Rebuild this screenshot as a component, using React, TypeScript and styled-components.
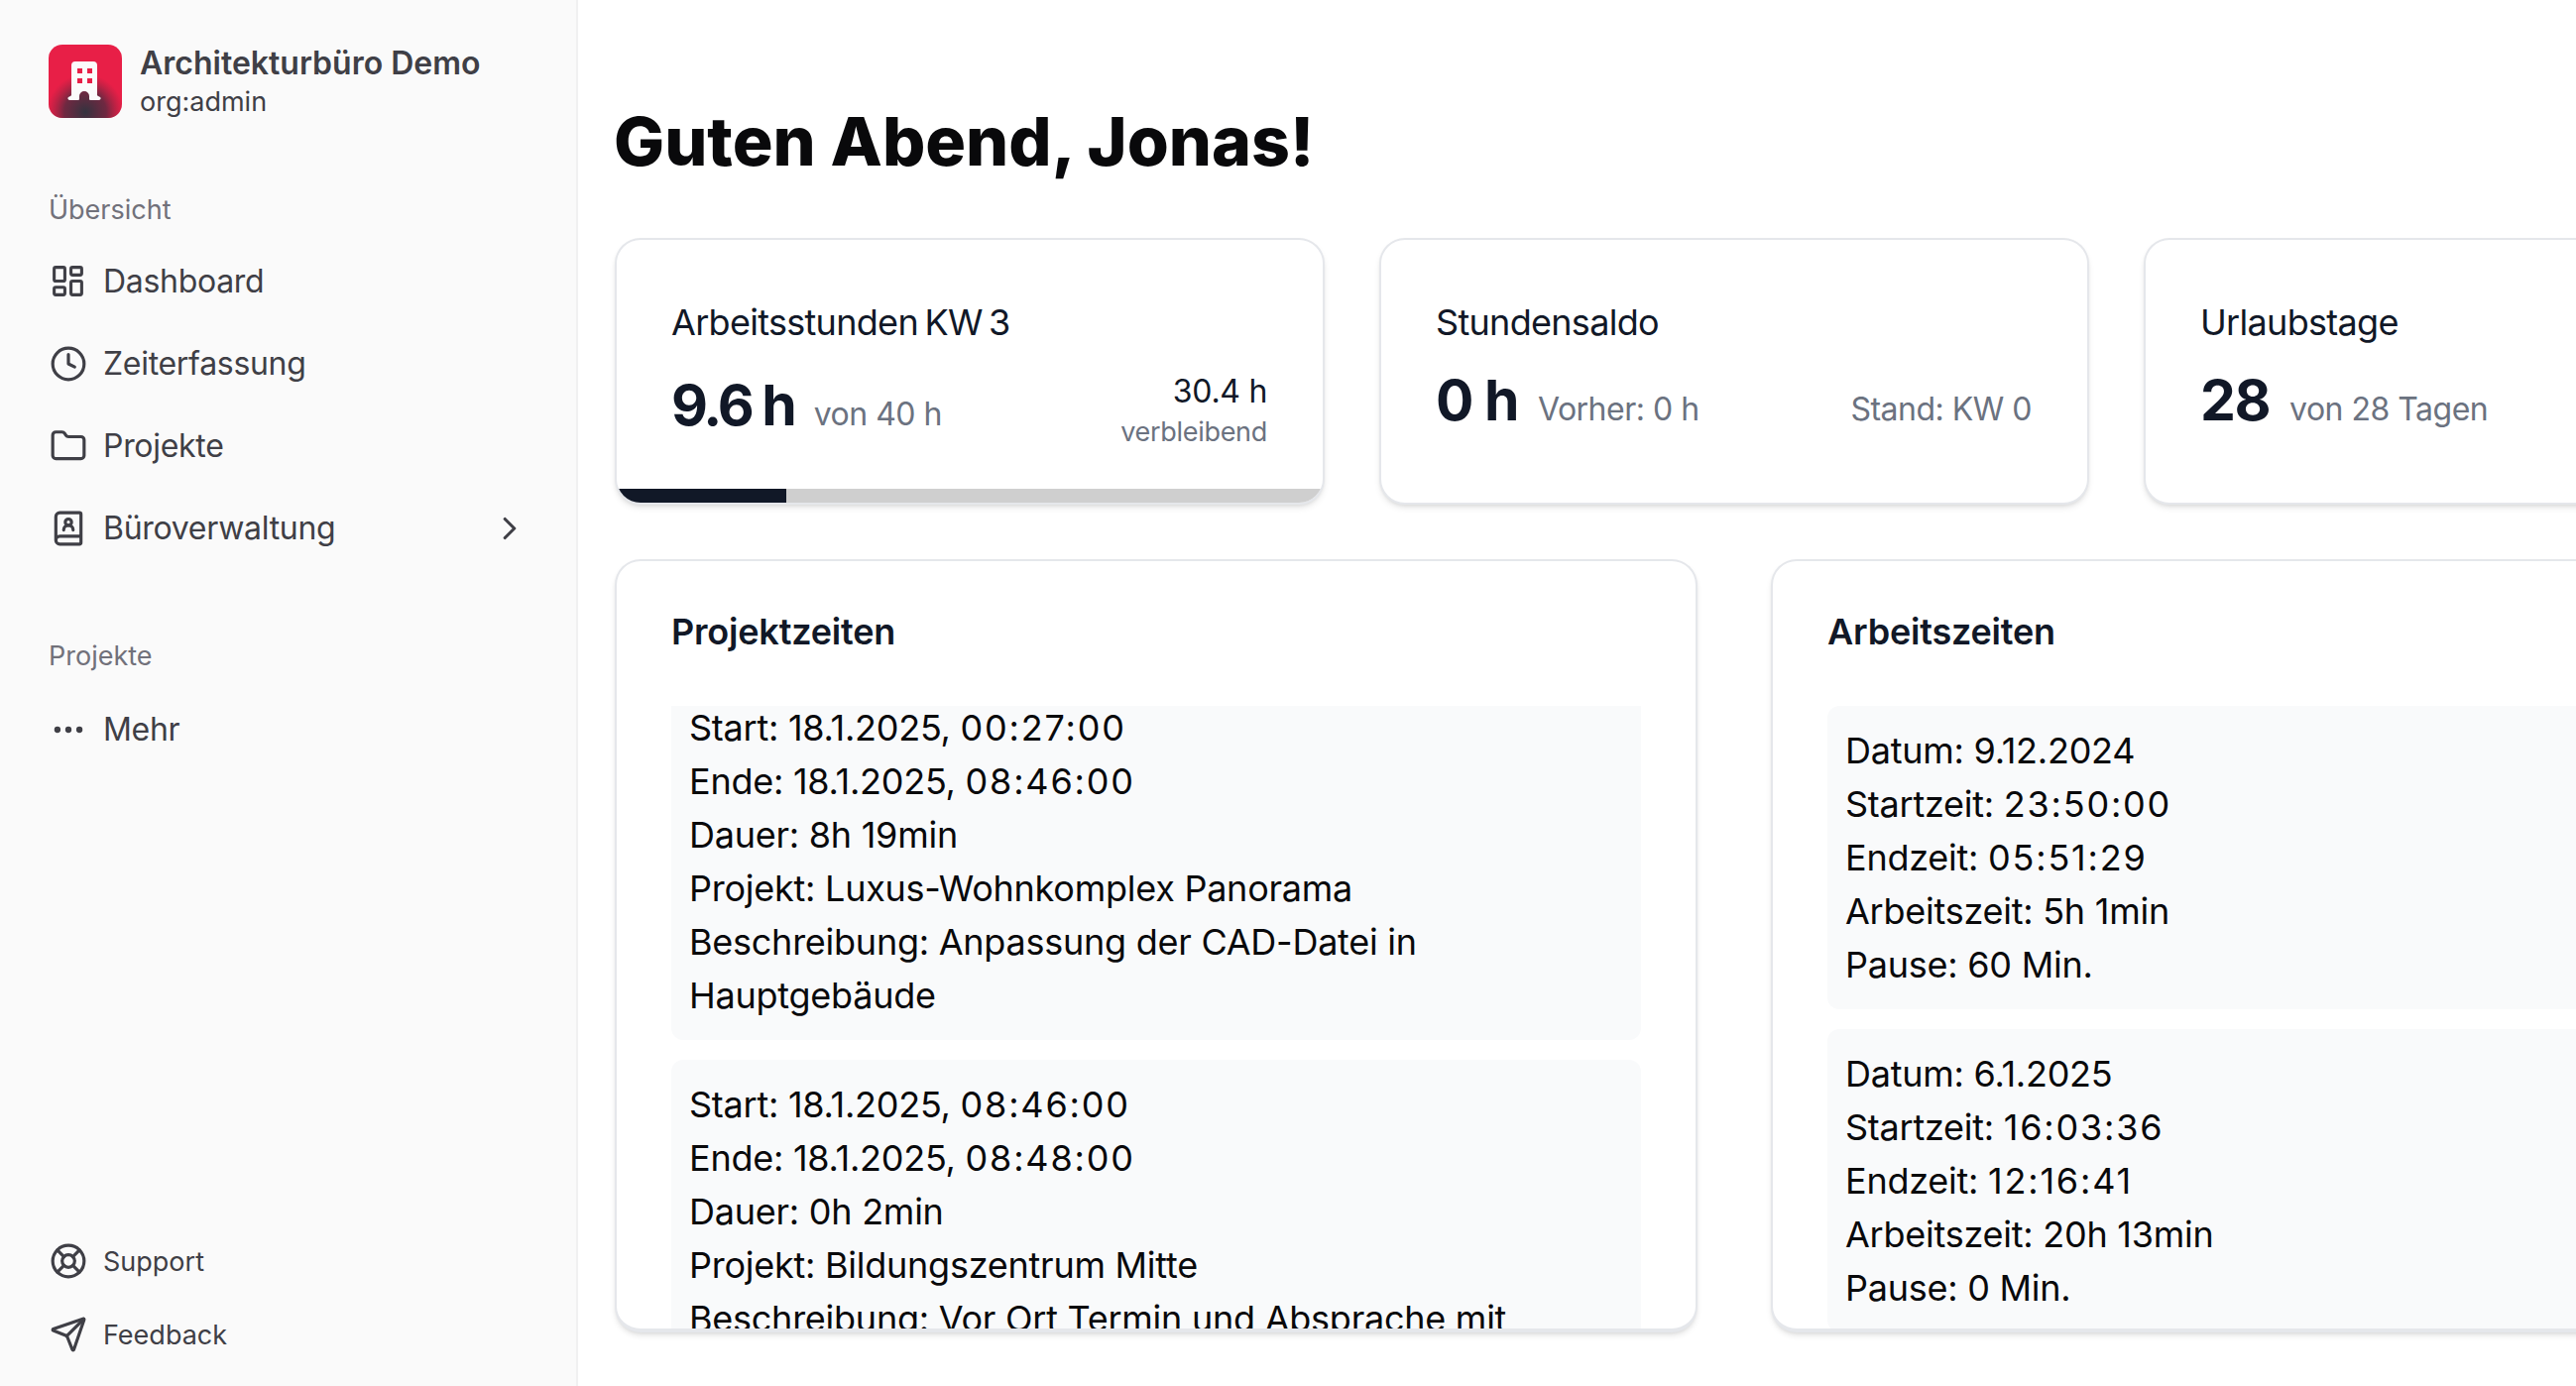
import React, { ReactElement, ReactNode } from 'react';
import styled, { createGlobalStyle } from 'styled-components';
import { ChevronRight, Clock, Folder, LayoutDashboard, LifeBuoy, MoreHorizontal, Send, BookUser } from 'lucide-react';

const projectEntries = [
  [
    'Start: 18.1.2025, 00:27:00',
    'Ende: 18.1.2025, 08:46:00',
    'Dauer: 8h 19min',
    'Projekt: Luxus-Wohnkomplex Panorama',
    'Beschreibung: Anpassung der CAD-Datei in Hauptgebäude',
  ],
  [
    'Start: 18.1.2025, 08:46:00',
    'Ende: 18.1.2025, 08:48:00',
    'Dauer: 0h 2min',
    'Projekt: Bildungszentrum Mitte',
    'Beschreibung: Vor Ort Termin und Absprache mit Bauleitung',
  ],
];

const workEntries = [
  ['Datum: 9.12.2024', 'Startzeit: 23:50:00', 'Endzeit: 05:51:29', 'Arbeitszeit: 5h 1min', 'Pause: 60 Min.'],
  ['Datum: 6.1.2025', 'Startzeit: 16:03:36', 'Endzeit: 12:16:41', 'Arbeitszeit: 20h 13min', 'Pause: 0 Min.'],
];

function NavItem(props: { icon: ReactNode; label: string; chevron?: boolean }): ReactElement {
  return (
    <NavRow>
      <IconSlot>{props.icon}</IconSlot>
      <NavLabel>{props.label}</NavLabel>
      {props.chevron && (
        <ChevronSlot>
          <ChevronRight size={38} strokeWidth={2} />
        </ChevronSlot>
      )}
    </NavRow>
  );
}

function Entry(props: { lines: string[] }): ReactElement {
  return (
    <EntryBox>
      {props.lines.map((line) => (
        <p key={line}>
          {line.split(/(\d\d:\d\d:\d\d)/).map((part, i) =>
            i % 2 === 1 ? <Time key={part}>{part}</Time> : part
          )}
        </p>
      ))}
    </EntryBox>
  );
}

export default function App(): ReactElement {
  return (
    <>
      <GlobalStyle />
      <Page>
        <Sidebar>
          <Brand>
            <Logo>
              <svg viewBox="0 0 74 74" width="74" height="74">
                <defs>
                  <radialGradient id="shade" cx="50%" cy="92%" r="52%">
                    <stop offset="0%" stopColor="#33333f" />
                    <stop offset="55%" stopColor="#5a2a40" stopOpacity="0.85" />
                    <stop offset="100%" stopColor="#8a2440" stopOpacity="0" />
                  </radialGradient>
                </defs>
                <rect width="74" height="74" fill="#e81f47" />
                <rect width="74" height="74" fill="url(#shade)" />
                <path
                  d="M23 21a4 4 0 0 1 4-4h18a4 4 0 0 1 4 4v30c0 1 2 1 3 2a1.7 1.7 0 0 1-1 3H42c-1 0-1-1-1-2v-2a5 5 0 0 0-10 0v2c0 1 0 2-1 2H21a1.7 1.7 0 0 1-1-3c1-1 3-1 3-2z"
                  fill="#fbfbfb"
                />
                <rect x="29" y="24" width="5" height="5" fill="#e81f47" />
                <rect x="39" y="24" width="5" height="5" fill="#e81f47" />
                <rect x="29" y="34" width="5" height="5" fill="#e81f47" />
                <rect x="39" y="34" width="5" height="5" fill="#e81f47" />
              </svg>
            </Logo>
            <BrandText>
              <BrandName>Architekturbüro Demo</BrandName>
              <BrandRole>org:admin</BrandRole>
            </BrandText>
          </Brand>

          <SectionLabel>Übersicht</SectionLabel>
          <NavItem icon={<LayoutDashboard size={37} strokeWidth={2} />} label="Dashboard" />
          <NavItem icon={<Clock size={38} strokeWidth={2} />} label="Zeiterfassung" />
          <NavItem icon={<Folder size={38} strokeWidth={2} />} label="Projekte" />
          <NavItem icon={<BookUser size={38} strokeWidth={2} />} label="Büroverwaltung" chevron />

          <SecondLabel>Projekte</SecondLabel>
          <NavItem icon={<MoreHorizontal size={38} strokeWidth={2} />} label="Mehr" />

          <SidebarFooter>
            <FooterRow>
              <IconSlot>
                <LifeBuoy size={38} strokeWidth={2} />
              </IconSlot>
              <FooterLabel>Support</FooterLabel>
            </FooterRow>
            <FooterRow>
              <IconSlot>
                <Send size={38} strokeWidth={2} />
              </IconSlot>
              <FooterLabel>Feedback</FooterLabel>
            </FooterRow>
          </SidebarFooter>
        </Sidebar>

        <Main>
          <Greeting>Guten Abend, Jonas!</Greeting>

          <StatRow>
            <StatCard>
              <StatBody>
                <StatTitle>Arbeitsstunden KW 3</StatTitle>
                <StatLine $stacked>
                  <StatMain $shift={5}>
                    <StatValue $tight>9.6 h</StatValue>
                    <StatMuted>von 40 h</StatMuted>
                  </StatMain>
                  <StatSide>
                    <SideValue>30.4 h</SideValue>
                    <SideNote>verbleibend</SideNote>
                  </StatSide>
                </StatLine>
              </StatBody>
              <Progress>
                <ProgressFill style={{ width: `${(9.6 / 40) * 100}%` }} />
              </Progress>
            </StatCard>

            <StatCard>
              <StatBody>
                <StatTitle>Stundensaldo</StatTitle>
                <StatLine>
                  <StatMain>
                    <StatValue>0 h</StatValue>
                    <StatMuted>Vorher: 0 h</StatMuted>
                  </StatMain>
                  <StatMuted>Stand: KW 0</StatMuted>
                </StatLine>
              </StatBody>
            </StatCard>

            <StatCard>
              <StatBody>
                <StatTitle>Urlaubstage</StatTitle>
                <StatLine>
                  <StatMain>
                    <StatValue>28</StatValue>
                    <StatMuted>von 28 Tagen</StatMuted>
                  </StatMain>
                </StatLine>
              </StatBody>
            </StatCard>
          </StatRow>

          <ListRow>
            <ListCard>
              <ListTitle>Projektzeiten</ListTitle>
              <ListScroll $offset={-23}>
                {projectEntries.map((lines) => (
                  <Entry key={lines[0]} lines={lines} />
                ))}
              </ListScroll>
            </ListCard>
            <ListCard>
              <ListTitle>Arbeitszeiten</ListTitle>
              <ListScroll $offset={0}>
                {workEntries.map((lines) => (
                  <Entry key={lines[0]} lines={lines} />
                ))}
              </ListScroll>
            </ListCard>
          </ListRow>
        </Main>
      </Page>
    </>
  );
}

const GlobalStyle = createGlobalStyle`
  html, body {
    margin: 0;
    height: 100%;
    background: #fff;
    overflow: hidden;
  }
  body {
    font-family: Inter, "Liberation Sans", sans-serif;
    color: #18181b;
  }
  * { box-sizing: border-box; }
`;

const Page = styled.div`
  display: flex;
  width: 2598px;
  height: 1398px;
  overflow: hidden;
`;

const Sidebar = styled.aside`
  flex: 0 0 583px;
  display: flex;
  flex-direction: column;
  background: #fafafa;
  border-right: 2px solid #f0f0f1;
  padding: 44px 48px 0 49px;
`;

const Brand = styled.div`
  display: flex;
  align-items: center;
  gap: 18px;
  height: 76px;
`;

const Logo = styled.div`
  width: 74px;
  height: 74px;
  flex: none;
  border-radius: 14px;
  overflow: hidden;
  svg { display: block; }
`;

const BrandText = styled.div`
  display: flex;
  flex-direction: column;
  gap: 2px;
  margin-top: -1px;
`;

const BrandName = styled.div`
  font-size: 32px;
  line-height: 40px;
  font-weight: 600;
  color: #3f3f46;
`;

const BrandRole = styled.div`
  font-size: 27px;
  line-height: 33px;
  color: #3f3f46;
`;

const SectionLabel = styled.div`
  font-size: 27px;
  line-height: 40px;
  color: #71717a;
  margin: 72px 0 10px;
`;

const SecondLabel = styled(SectionLabel)`
  margin: 68px 0 12px;
`;

const NavRow = styled.div`
  display: flex;
  align-items: center;
  height: 83px;
  color: #3f3f46;
`;

const IconSlot = styled.div`
  width: 39px;
  margin-right: 16px;
  flex: none;
  display: flex;
  align-items: center;
  justify-content: center;
  color: #3f3f46;
`;

const NavLabel = styled.span`
  font-size: 32px;
  letter-spacing: -0.3px;
  flex: 1;
`;

const ChevronSlot = styled.div`
  display: flex;
`;

const SidebarFooter = styled.div`
  margin-top: auto;
  padding-bottom: 15px;
`;

const FooterRow = styled.div`
  display: flex;
  align-items: center;
  height: 74px;
`;

const FooterLabel = styled.span`
  font-size: 27px;
  color: #3f3f46;
`;

const Main = styled.main`
  flex: 1;
  min-width: 0;
  padding: 0 0 0 37px;
`;

const Greeting = styled.h1`
  font-size: 68px;
  line-height: 80px;
  font-weight: 800;
  color: #09090b;
  margin: 102px 0 58px -1px;
`;

const StatRow = styled.div`
  display: flex;
  gap: 55px;
`;

const StatCard = styled.section`
  flex: 0 0 716px;
  height: 269px;
  display: flex;
  flex-direction: column;
  background: #fff;
  border: 2px solid #e5e7eb;
  border-radius: 26px;
  box-shadow: 0 4px 6px -1px rgba(0, 0, 0, 0.1), 0 2px 4px -2px rgba(0, 0, 0, 0.1);
  overflow: hidden;
`;

const StatBody = styled.div`
  flex: 1;
  padding: 60px 56px 0 55px;
`;

const StatTitle = styled.div`
  font-size: 36px;
  line-height: 46px;
  letter-spacing: -0.7px;
  word-spacing: -3px;
  color: #111827;
`;

const StatLine = styled.div<{ $stacked?: boolean }>`
  display: flex;
  justify-content: space-between;
  align-items: ${(p) => (p.$stacked ? 'flex-start' : 'flex-end')};
  margin-top: 22px;
`;

const StatMain = styled.div<{ $shift?: number }>`
  display: flex;
  align-items: baseline;
  gap: 20px;
  margin-top: ${(p) => p.$shift ?? 0}px;
`;

const StatValue = styled.span<{ $tight?: boolean }>`
  font-size: 57px;
  line-height: 68px;
  font-weight: 700;
  letter-spacing: ${(p) => (p.$tight ? '-3px' : '-1.5px')};
  color: #111827;
`;

const StatMuted = styled.span`
  font-size: 32px;
  line-height: 50px;
  letter-spacing: -0.5px;
  color: #6b7280;
`;

const StatSide = styled.div`
  display: flex;
  flex-direction: column;
  align-items: flex-end;
  margin-top: 3px;
`;

const SideValue = styled.span`
  font-size: 32px;
  line-height: 44px;
  letter-spacing: -0.3px;
  color: #111827;
`;

const SideNote = styled.span`
  font-size: 27px;
  line-height: 38px;
  letter-spacing: -0.3px;
  color: #6b7280;
`;

const Progress = styled.div`
  height: 14px;
  background: #cfcfcf;
`;

const ProgressFill = styled.div`
  height: 100%;
  background: #111827;
`;

const ListRow = styled.div`
  display: flex;
  gap: 74px;
  margin-top: 55px;
`;

const ListCard = styled.section`
  flex: 0 0 1092px;
  height: 780px;
  display: flex;
  flex-direction: column;
  background: #fff;
  border: 2px solid #e5e7eb;
  border-bottom-width: 4px;
  border-radius: 26px;
  box-shadow: 0 4px 6px -1px rgba(0, 0, 0, 0.1), 0 2px 4px -2px rgba(0, 0, 0, 0.1);
  padding: 48px 55px 0;
  overflow: hidden;
`;

const ListTitle = styled.h2`
  font-size: 36px;
  line-height: 46px;
  font-weight: 600;
  letter-spacing: -0.2px;
  color: #111827;
  margin: 0 0 52px;
`;

const ListScroll = styled.div<{ $offset: number }>`
  flex: 1;
  min-height: 0;
  overflow: hidden;
  display: flex;
  flex-direction: column;
  gap: 20px;
  & > :first-child {
    margin-top: ${(p) => p.$offset}px;
  }
`;

const EntryBox = styled.div`
  flex: none;
  background: #f9fafb;
  border-radius: 12px;
  padding: 18px;
  font-size: 36px;
  line-height: 54px;
  letter-spacing: -0.25px;
  color: #09090b;
  p { margin: 0; }
`;

const Time = styled.span`
  letter-spacing: 1.8px;
`;
